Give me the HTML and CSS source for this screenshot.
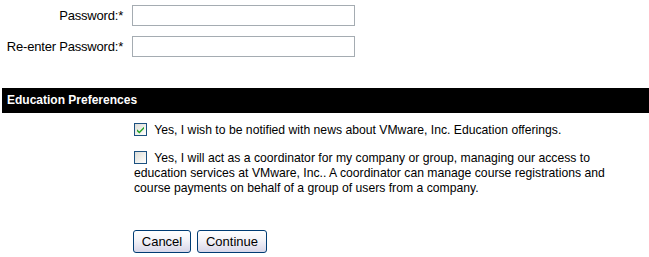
FILE: index.html
```html
<!DOCTYPE html>
<html>
<head>
<meta charset="utf-8">
<link rel="stylesheet" href="styles.css">
</head>
<body>
<div class="page">
  <div class="fields">
    <div class="row">
      <label class="label">Password:*</label>
      <input class="text-input" type="password">
    </div>
    <div class="row">
      <label class="label">Re-enter Password:*</label>
      <input class="text-input" type="password">
    </div>
  </div>

  <div class="section-bar">Education Preferences</div>

  <div class="options">
    <p class="option">
      <span class="check checked"><svg viewBox="0 0 11 11" width="11" height="11"><path d="M2 5.2 L4.3 7.6 L9 2.8 L9 4.8 L4.3 9.6 L2 7.2 Z" fill="#21a121"/></svg></span>
      Yes, I wish to be notified with news about VMware, Inc. Education offerings.
    </p>
    <p class="option second">
      <span class="check"></span>
      Yes, I will act as a coordinator for my company or group, managing our access to education services at VMware, Inc.. A coordinator can manage course registrations and course payments on behalf of a group of users from a company.
    </p>
  </div>

  <div class="actions">
    <button class="btn cancel" type="button">Cancel</button>
    <button class="btn continue" type="button">Continue</button>
  </div>
  <div class="bottom-rule"></div>
</div>
</body>
</html>
```
FILE: styles.css
```css
html, body {
  margin: 0;
  padding: 0;
  background: #fff;
}
body {
  font-family: "Liberation Sans", Arial, sans-serif;
  font-size: 13px;
  color: #000;
  width: 649px;
  height: 257px;
  overflow: hidden;
}
.page {
  display: flex;
  flex-direction: column;
}
.fields {
  display: flex;
  flex-direction: column;
  gap: 10px;
  padding-top: 5px;
}
.row {
  display: grid;
  grid-template-columns: 123px 223px;
  column-gap: 9px;
  align-items: center;
}
.label {
  text-align: right;
  line-height: 21px;
  letter-spacing: -0.2px;
}
.text-input {
  box-sizing: border-box;
  width: 223px;
  height: 21px;
  margin: 0;
  border: 1px solid #a5acb2;
  padding: 1px 3px;
  font: inherit;
  outline: none;
}
.section-bar {
  margin-top: 31px;
  margin-left: 2px;
  height: 25px;
  line-height: 25px;
  background: #000;
  color: #fff;
  font-weight: bold;
  font-size: 12px;
  padding-left: 5px;
}
.options {
  padding-left: 134px;
  width: 480px;
  display: flex;
  flex-direction: column;
  gap: 13px;
  padding-top: 10px;
}
.option {
  margin: 0;
  font-size: 12.2px;
  line-height: 15px;
}
.check {
  display: inline-block;
  box-sizing: border-box;
  width: 13px;
  height: 13px;
  border: 1px solid #1c5180;
  background: linear-gradient(135deg, #dcdcd7 0%, #f2f2ee 60%, #ffffff 100%);
  vertical-align: -2px;
  margin-right: 4px;
}
.check svg {
  display: block;
}
.actions {
  display: flex;
  gap: 6px;
  padding-left: 133px;
  margin-top: 34px;
}
.btn {
  box-sizing: border-box;
  height: 23px;
  margin: 0;
  border: 1px solid #003c74;
  border-radius: 3px;
  background: linear-gradient(to bottom, #ffffff 0%, #f3f3f8 45%, #d7d6e8 100%);
  font-family: "Liberation Sans", Arial, sans-serif;
  font-size: 13px;
  color: #000;
  padding: 0;
}
.cancel { width: 58px; }
.continue { width: 70px; }
.bottom-rule {
  margin-top: 4px;
  height: 1px;
  background: #c8c8c8;
}
```
